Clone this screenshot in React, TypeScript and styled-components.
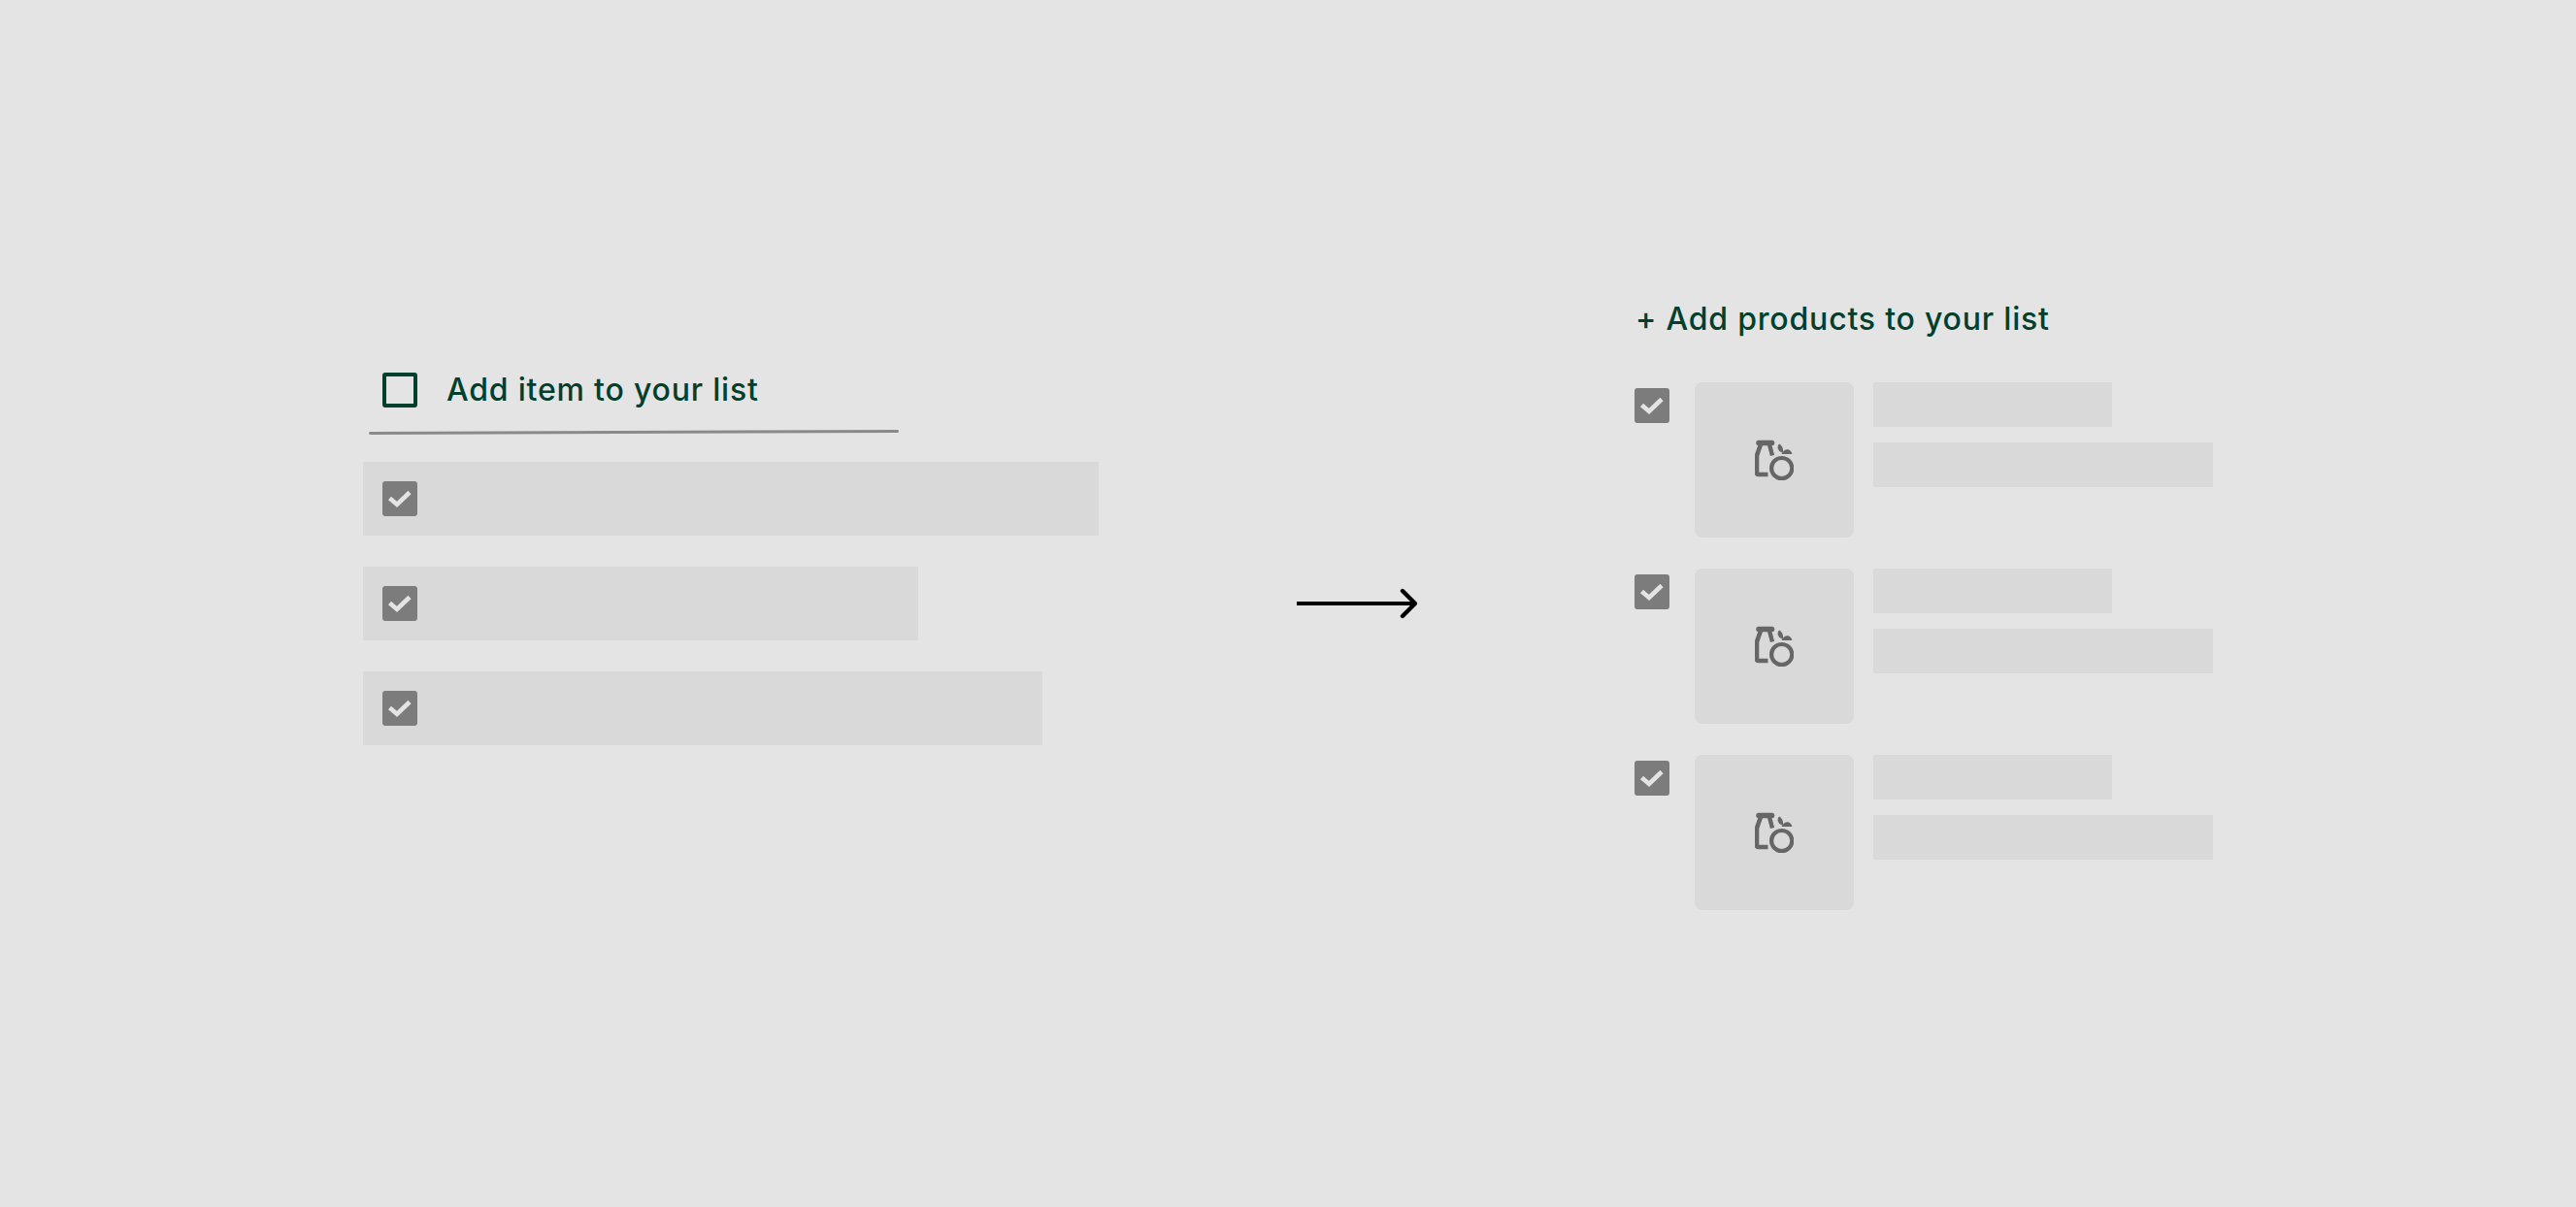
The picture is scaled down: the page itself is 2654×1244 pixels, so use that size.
import React from "react";
import styled, { createGlobalStyle } from "styled-components";

const Global = createGlobalStyle`
  html, body { margin: 0; padding: 0; background: #e4e4e4; }
  body { font-family: "Inter", "Noto Sans", sans-serif; }
`;

const Page = styled.main`
  width: 2654px;
  height: 1244px;
  box-sizing: border-box;
  overflow: hidden;
  background: #e4e4e4;
  padding-left: 374px;
  display: grid;
  grid-template-columns: 962px 348px 1fr;
  align-items: start;
`;

const LeftColumn = styled.section`
  padding-top: 384px;
  display: flex;
  flex-direction: column;
`;

const EntryRow = styled.div`
  display: flex;
  align-items: center;
  gap: 30px;
  padding-left: 20px;
  height: 36px;
`;

const EmptyBox = styled.span`
  width: 36px;
  height: 36px;
  box-sizing: border-box;
  border: 4px solid #033f2d;
  border-radius: 3px;
`;

const Heading = styled.h2`
  margin: 0;
  font-family: "Inter", "Noto Sans", sans-serif;
  font-weight: 500;
  font-size: 32px;
  line-height: 38px;
  letter-spacing: 0.8px;
  color: #033f2d;
  white-space: nowrap;
`;

const Rule = styled.div`
  width: 546px;
  height: 3px;
  margin: 24px 0 0 6px;
  border-radius: 2px;
  background: #8a8a8a;
  transform: rotate(-0.2deg);
`;

const ItemList = styled.div`
  margin-top: 29px;
  display: flex;
  flex-direction: column;
  gap: 32px;
`;

const ItemBar = styled.div<{ $width: number }>`
  width: ${(p) => p.$width}px;
  height: 76px;
  box-sizing: border-box;
  padding-left: 20px;
  display: flex;
  align-items: center;
  background: #d9d9d9;
`;

const CheckedBox = styled.span`
  flex: none;
  width: 36px;
  height: 36px;
  border-radius: 3px;
  background: #7c7c7c;
  display: flex;
  align-items: center;
  justify-content: center;
`;

const ArrowColumn = styled.div`
  padding-top: 604px;
  display: flex;
`;

const RightColumn = styled.section`
  padding-top: 310px;
  display: flex;
  flex-direction: column;
`;

const ProductHeading = styled(Heading)`
  height: 36px;
  padding-left: 1px;
`;

const ProductList = styled.div`
  margin-top: 48px;
  display: flex;
  flex-direction: column;
  gap: 32px;
`;

const ProductRow = styled.div`
  display: flex;
  align-items: flex-start;
`;

const ProductCheck = styled(CheckedBox)`
  margin-top: 6px;
  margin-right: 26px;
`;

const Thumb = styled.div`
  width: 164px;
  height: 160px;
  border-radius: 8px;
  background: #d9d9d9;
  display: flex;
  align-items: center;
  justify-content: center;
  margin-right: 20px;
`;

const Lines = styled.div`
  display: flex;
  flex-direction: column;
  gap: 16px;
`;

const Line = styled.div<{ $width: number }>`
  width: ${(p) => p.$width}px;
  height: 46px;
  background: #d9d9d9;
`;

const Check = () => (
  <svg width="36" height="36" viewBox="0 0 36 36" fill="none">
    <path d="M7.5 17.5 L15 24 L28 11.5" stroke="#e4e4e4" strokeWidth="4.6" />
  </svg>
);

const Arrow = () => (
  <svg width="124" height="36" viewBox="0 0 124 36" fill="none">
    <path d="M0 18 H121" stroke="#000" strokeWidth="4" />
    <path d="M109 5 L122 18 L109 31" stroke="#000" strokeWidth="4.4" strokeLinecap="round" strokeLinejoin="miter" />
  </svg>
);

const ProductIcon = () => (
  <svg width="40" height="42" viewBox="28 13 40 42" fill="none">
    <path d="M32 16.5 H45.5" stroke="#666" strokeWidth="5.5" strokeLinecap="round" />
    <path d="M34 18 L30.5 28 C29.8 30 30 31 30 33 V47.5 C30 48.5 30.5 49 31.5 49 H41.5" stroke="#666" strokeWidth="4.6" />
    <path d="M43 18 L46 29.5" stroke="#666" strokeWidth="4.4" />
    <circle cx="55.7" cy="42.6" r="10.6" stroke="#666" strokeWidth="4.2" />
    <path d="M53 17.5 C50.5 20 51 25.5 57 26.5 C57.5 23 56.5 19.5 53 17.5 Z" fill="#666" />
    <path d="M55.5 28 C58 21.5 65 21.5 66.5 28 Z" fill="#666" />
  </svg>
);

const items = [758, 572, 700];

export default function App() {
  return (
    <Page>
      <Global />
      <LeftColumn>
        <EntryRow>
          <EmptyBox />
          <Heading>Add item to your list</Heading>
        </EntryRow>
        <Rule />
        <ItemList>
          {items.map((w) => (
            <ItemBar key={w} $width={w}>
              <CheckedBox>
                <Check />
              </CheckedBox>
            </ItemBar>
          ))}
        </ItemList>
      </LeftColumn>
      <ArrowColumn>
        <Arrow />
      </ArrowColumn>
      <RightColumn>
        <ProductHeading>+ Add products to your list</ProductHeading>
        <ProductList>
          {[0, 1, 2].map((i) => (
            <ProductRow key={i}>
              <ProductCheck>
                <Check />
              </ProductCheck>
              <Thumb>
                <ProductIcon />
              </Thumb>
              <Lines>
                <Line $width={246} />
                <Line $width={350} />
              </Lines>
            </ProductRow>
          ))}
        </ProductList>
      </RightColumn>
    </Page>
  );
}
